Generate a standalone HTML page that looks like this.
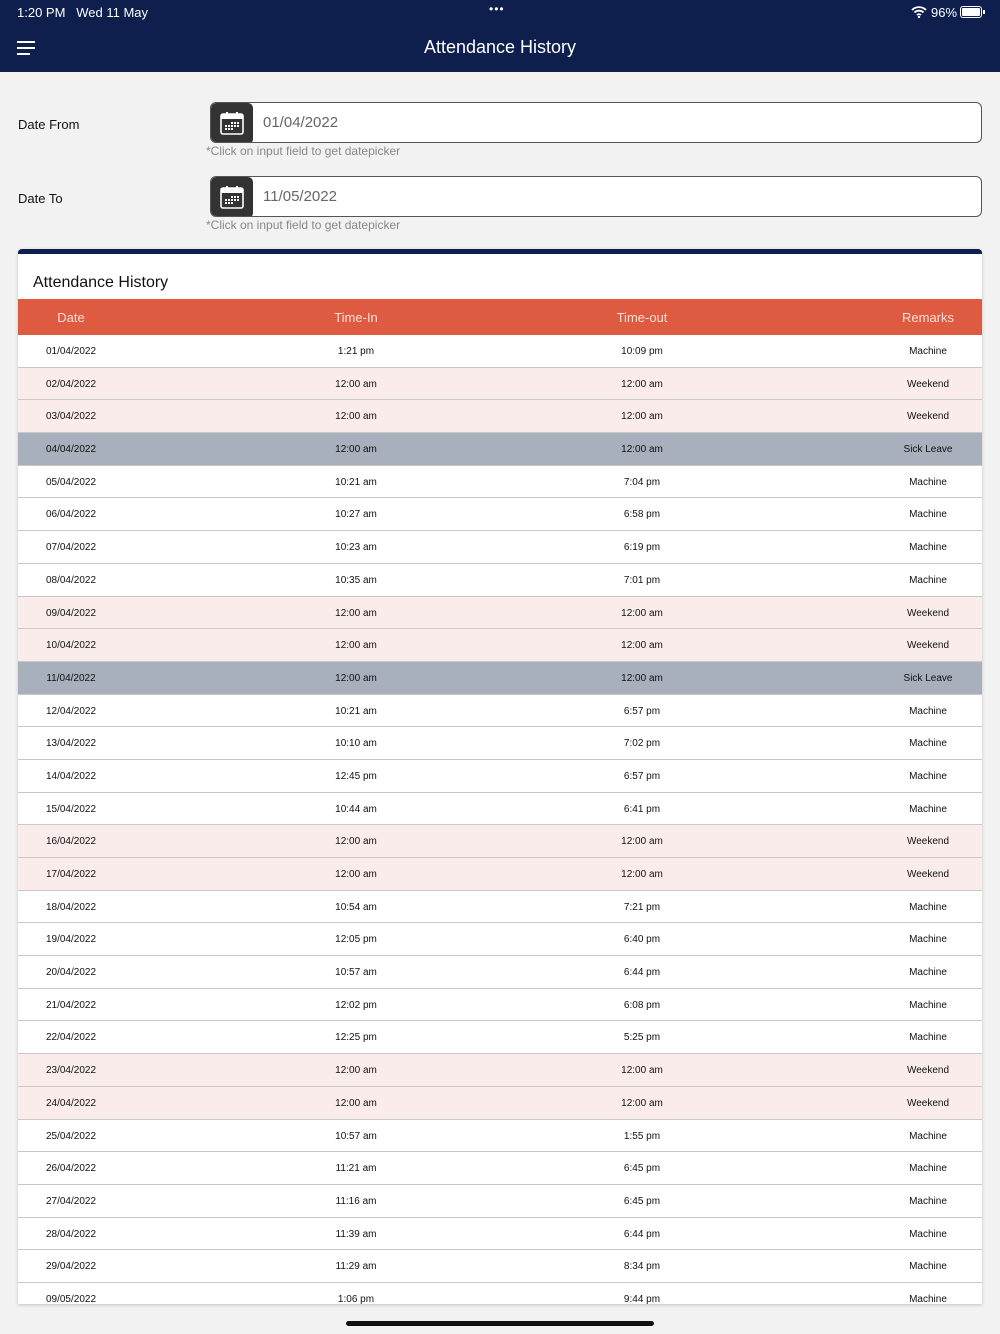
<!DOCTYPE html>
<html><head><meta charset="utf-8">
<style>
*{margin:0;padding:0;box-sizing:border-box}
body{width:1000px;height:1334px;background:#f2f2f2;font-family:"Liberation Sans",sans-serif;position:relative;overflow:hidden;color:#111}
.top{position:absolute;left:0;top:0;width:1000px;height:72px;background:#0e1f4d;color:#fff}
.sb{position:absolute;top:5px;font-size:13px}
.title{position:absolute;top:37px;width:100%;text-align:center;font-size:18px}
.ham{position:absolute;left:17px;top:41px;width:18px}
.ham i{display:block;height:2px;background:#fff;margin-bottom:4px}
.lbl{position:absolute;left:18px;font-size:13px}
.inp{position:absolute;left:210px;width:772px;height:41px;border:1px solid #555;border-radius:6px;background:#fff;overflow:hidden}
.cal{position:absolute;left:0;top:0;width:42px;height:41px;background:#333;border-radius:5px}
.inp span{position:absolute;left:52px;top:11px;font-size:15px;color:#666}
.hint{position:absolute;left:206px;font-size:12px;color:#888}
.card{position:absolute;left:18px;top:249px;width:964px;height:1055px;background:#fff;border-top:5px solid #0e1f4d;border-radius:4px 4px 0 0;overflow:hidden;box-shadow:0 1px 3px rgba(0,0,0,.2)}
.ct{position:absolute;left:15px;top:20px;font-size:16px}
.th{position:absolute;top:45px;left:0;width:964px;height:36px;background:#de5a40;color:#fbe0d8;font-size:13px}
.rows{position:absolute;top:81px;left:0;width:964px}
.r{height:32.7px;border-bottom:1px solid #c8c8c8;position:relative;font-size:10px}
.c{position:absolute;top:11px;transform:translateX(-50%);white-space:nowrap}
.th .c{top:11px}
.c1{left:53px}.c2{left:338px}.c3{left:624px}.c4{left:910px}
.w{background:#fbecec}.s{background:#a7b0bc}
.home{position:absolute;left:346px;top:1321px;width:308px;height:5px;border-radius:3px;background:#111}
</style></head><body>
<div class="top">
<div class="sb" style="left:17px">1:20 PM&nbsp;&nbsp; Wed 11 May</div>
<div class="sb" style="left:489px;top:2px;letter-spacing:1px;font-size:12px">•••</div>
<svg style="position:absolute;left:911px;top:6px" width="16" height="12" viewBox="0 0 16 12"><path d="M1 4a10 10 0 0 1 14 0M3.5 6.5a6.5 6.5 0 0 1 9 0M6 9a3 3 0 0 1 4 0" stroke="#fff" stroke-width="1.8" fill="none"/><circle cx="8" cy="11" r="1.2" fill="#fff"/></svg>
<div class="sb" style="left:931px">96%</div>
<div style="position:absolute;left:960px;top:6px;width:22px;height:12px;border:1px solid #fff;border-radius:3px;padding:1px"><div style="background:#fff;width:100%;height:100%;border-radius:1px"></div></div>
<div style="position:absolute;left:983px;top:10px;width:2px;height:4px;background:#fff"></div>
<div class="ham"><i></i><i></i><i style="width:70%"></i></div>
<div class="title">Attendance History</div>
</div>

<div class="lbl" style="top:117px">Date From</div>
<div class="inp" style="top:102px"><div class="cal"><svg style="position:absolute;left:9px;top:9px" width="24" height="23" viewBox="0 0 24 23"><rect x="1" y="2" width="22" height="20" rx="2" fill="none" stroke="#fff" stroke-width="1.6"/><rect x="1" y="2" width="22" height="5" fill="#fff"/><rect x="6" y="0" width="2" height="4" fill="#fff"/><rect x="16" y="0" width="2" height="4" fill="#fff"/><g fill="#fff"><rect x="11" y="10" width="2" height="2"/><rect x="14" y="10" width="2" height="2"/><rect x="17" y="10" width="2" height="2"/><rect x="5" y="13" width="2" height="2"/><rect x="8" y="13" width="2" height="2"/><rect x="11" y="13" width="2" height="2"/><rect x="14" y="13" width="2" height="2"/><rect x="17" y="13" width="2" height="2"/><rect x="5" y="16" width="2" height="2"/><rect x="8" y="16" width="2" height="2"/><rect x="11" y="16" width="2" height="2"/></g></svg></div><span>01/04/2022</span></div>
<div class="hint" style="top:144px">*Click on input field to get datepicker</div>

<div class="lbl" style="top:191px">Date To</div>
<div class="inp" style="top:176px"><div class="cal"><svg style="position:absolute;left:9px;top:9px" width="24" height="23" viewBox="0 0 24 23"><rect x="1" y="2" width="22" height="20" rx="2" fill="none" stroke="#fff" stroke-width="1.6"/><rect x="1" y="2" width="22" height="5" fill="#fff"/><rect x="6" y="0" width="2" height="4" fill="#fff"/><rect x="16" y="0" width="2" height="4" fill="#fff"/><g fill="#fff"><rect x="11" y="10" width="2" height="2"/><rect x="14" y="10" width="2" height="2"/><rect x="17" y="10" width="2" height="2"/><rect x="5" y="13" width="2" height="2"/><rect x="8" y="13" width="2" height="2"/><rect x="11" y="13" width="2" height="2"/><rect x="14" y="13" width="2" height="2"/><rect x="17" y="13" width="2" height="2"/><rect x="5" y="16" width="2" height="2"/><rect x="8" y="16" width="2" height="2"/><rect x="11" y="16" width="2" height="2"/></g></svg></div><span>11/05/2022</span></div>
<div class="hint" style="top:218px">*Click on input field to get datepicker</div>

<div class="card">
<div class="ct">Attendance History</div>
<div class="th"><span class="c c1">Date</span><span class="c c2">Time-In</span><span class="c c3">Time-out</span><span class="c c4">Remarks</span></div>
<div class="rows">
<div class="r"><span class="c c1">01/04/2022</span><span class="c c2">1:21 pm</span><span class="c c3">10:09 pm</span><span class="c c4">Machine</span></div>
<div class="r w"><span class="c c1">02/04/2022</span><span class="c c2">12:00 am</span><span class="c c3">12:00 am</span><span class="c c4">Weekend</span></div>
<div class="r w"><span class="c c1">03/04/2022</span><span class="c c2">12:00 am</span><span class="c c3">12:00 am</span><span class="c c4">Weekend</span></div>
<div class="r s"><span class="c c1">04/04/2022</span><span class="c c2">12:00 am</span><span class="c c3">12:00 am</span><span class="c c4">Sick Leave</span></div>
<div class="r"><span class="c c1">05/04/2022</span><span class="c c2">10:21 am</span><span class="c c3">7:04 pm</span><span class="c c4">Machine</span></div>
<div class="r"><span class="c c1">06/04/2022</span><span class="c c2">10:27 am</span><span class="c c3">6:58 pm</span><span class="c c4">Machine</span></div>
<div class="r"><span class="c c1">07/04/2022</span><span class="c c2">10:23 am</span><span class="c c3">6:19 pm</span><span class="c c4">Machine</span></div>
<div class="r"><span class="c c1">08/04/2022</span><span class="c c2">10:35 am</span><span class="c c3">7:01 pm</span><span class="c c4">Machine</span></div>
<div class="r w"><span class="c c1">09/04/2022</span><span class="c c2">12:00 am</span><span class="c c3">12:00 am</span><span class="c c4">Weekend</span></div>
<div class="r w"><span class="c c1">10/04/2022</span><span class="c c2">12:00 am</span><span class="c c3">12:00 am</span><span class="c c4">Weekend</span></div>
<div class="r s"><span class="c c1">11/04/2022</span><span class="c c2">12:00 am</span><span class="c c3">12:00 am</span><span class="c c4">Sick Leave</span></div>
<div class="r"><span class="c c1">12/04/2022</span><span class="c c2">10:21 am</span><span class="c c3">6:57 pm</span><span class="c c4">Machine</span></div>
<div class="r"><span class="c c1">13/04/2022</span><span class="c c2">10:10 am</span><span class="c c3">7:02 pm</span><span class="c c4">Machine</span></div>
<div class="r"><span class="c c1">14/04/2022</span><span class="c c2">12:45 pm</span><span class="c c3">6:57 pm</span><span class="c c4">Machine</span></div>
<div class="r"><span class="c c1">15/04/2022</span><span class="c c2">10:44 am</span><span class="c c3">6:41 pm</span><span class="c c4">Machine</span></div>
<div class="r w"><span class="c c1">16/04/2022</span><span class="c c2">12:00 am</span><span class="c c3">12:00 am</span><span class="c c4">Weekend</span></div>
<div class="r w"><span class="c c1">17/04/2022</span><span class="c c2">12:00 am</span><span class="c c3">12:00 am</span><span class="c c4">Weekend</span></div>
<div class="r"><span class="c c1">18/04/2022</span><span class="c c2">10:54 am</span><span class="c c3">7:21 pm</span><span class="c c4">Machine</span></div>
<div class="r"><span class="c c1">19/04/2022</span><span class="c c2">12:05 pm</span><span class="c c3">6:40 pm</span><span class="c c4">Machine</span></div>
<div class="r"><span class="c c1">20/04/2022</span><span class="c c2">10:57 am</span><span class="c c3">6:44 pm</span><span class="c c4">Machine</span></div>
<div class="r"><span class="c c1">21/04/2022</span><span class="c c2">12:02 pm</span><span class="c c3">6:08 pm</span><span class="c c4">Machine</span></div>
<div class="r"><span class="c c1">22/04/2022</span><span class="c c2">12:25 pm</span><span class="c c3">5:25 pm</span><span class="c c4">Machine</span></div>
<div class="r w"><span class="c c1">23/04/2022</span><span class="c c2">12:00 am</span><span class="c c3">12:00 am</span><span class="c c4">Weekend</span></div>
<div class="r w"><span class="c c1">24/04/2022</span><span class="c c2">12:00 am</span><span class="c c3">12:00 am</span><span class="c c4">Weekend</span></div>
<div class="r"><span class="c c1">25/04/2022</span><span class="c c2">10:57 am</span><span class="c c3">1:55 pm</span><span class="c c4">Machine</span></div>
<div class="r"><span class="c c1">26/04/2022</span><span class="c c2">11:21 am</span><span class="c c3">6:45 pm</span><span class="c c4">Machine</span></div>
<div class="r"><span class="c c1">27/04/2022</span><span class="c c2">11:16 am</span><span class="c c3">6:45 pm</span><span class="c c4">Machine</span></div>
<div class="r"><span class="c c1">28/04/2022</span><span class="c c2">11:39 am</span><span class="c c3">6:44 pm</span><span class="c c4">Machine</span></div>
<div class="r"><span class="c c1">29/04/2022</span><span class="c c2">11:29 am</span><span class="c c3">8:34 pm</span><span class="c c4">Machine</span></div>
<div class="r"><span class="c c1">09/05/2022</span><span class="c c2">1:06 pm</span><span class="c c3">9:44 pm</span><span class="c c4">Machine</span></div>
</div>
</div>
<div class="home"></div>
</body></html>
